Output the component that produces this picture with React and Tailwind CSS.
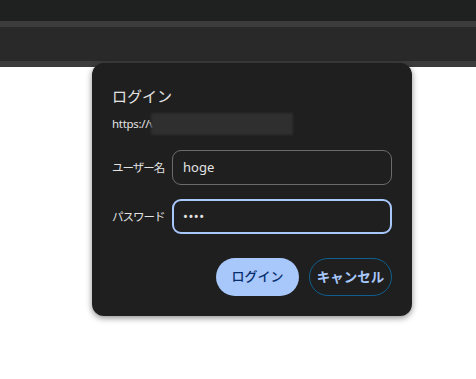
import React from 'react';

const font = { fontFamily: '"Noto Sans", "Noto Sans CJK JP", sans-serif' };

const App = () => {
  return (
    <div className="relative w-[476px] h-[379px] bg-white overflow-hidden" style={font}>
      {/* browser chrome */}
      <div className="h-[21px] bg-[#1f2120]" />
      <div className="h-[6px] bg-[#3c3c3c]" />
      <div className="h-[34px] bg-[#292929]" />
      <div className="h-[6px] bg-[#3c3c3c]" />

      {/* login dialog */}
      <div className="absolute left-[92px] top-[63px] w-[320px] h-[253px] bg-[#1f1f1f] rounded-[12px] shadow-[0_2px_6px_rgba(0,0,0,0.45)] pl-[20px] pr-[20px] pt-[23px]">
        <div className="h-[20px] leading-[20px] text-[15px] text-[#e3e3e3]">ログイン</div>
        <div className="mt-[7px] h-[22px] flex items-center text-[11.5px] text-[#e3e3e3]">
          <span className="tracking-[-0.3px]">https://v</span>
          <div className="-ml-[4px] w-[142px] h-[22px] bg-[#2f2f2f] blur-[1px]" />
        </div>

        <div className="mt-[15px] flex items-center h-[35px]">
          <div className="w-[60px] shrink-0 text-[11.5px] tracking-[-1px] text-[#e3e3e3]">ユーザー名</div>
          <div className="flex-1 h-[35px] rounded-[9px] border border-[#6b6b6b] flex items-center pl-[10px] text-[13px] text-[#e3e3e3]">
            hoge
          </div>
        </div>

        <div className="mt-[14px] flex items-center h-[35px]">
          <div className="w-[60px] shrink-0 text-[11.5px] tracking-[-1px] text-[#e3e3e3]">パスワード</div>
          <div className="flex-1 h-[35px] rounded-[9px] border-2 border-[#a8c7fa] flex items-center pl-[9px] text-[13px] text-[#e3e3e3] tracking-[0.5px]">
            ••••
          </div>
        </div>

        <div className="mt-[24px] flex justify-end gap-[10px]">
          <button className="w-[83px] h-[38px] rounded-full bg-[#a8c7fa] text-[#062e6f] text-[13px] font-medium">
            ログイン
          </button>
          <button className="w-[83px] h-[38px] rounded-full border border-[#0e5f8f] text-[#a8c7fa] text-[13.5px] font-semibold">
            キャンセル
          </button>
        </div>
      </div>
    </div>
  );
};

export default App;
